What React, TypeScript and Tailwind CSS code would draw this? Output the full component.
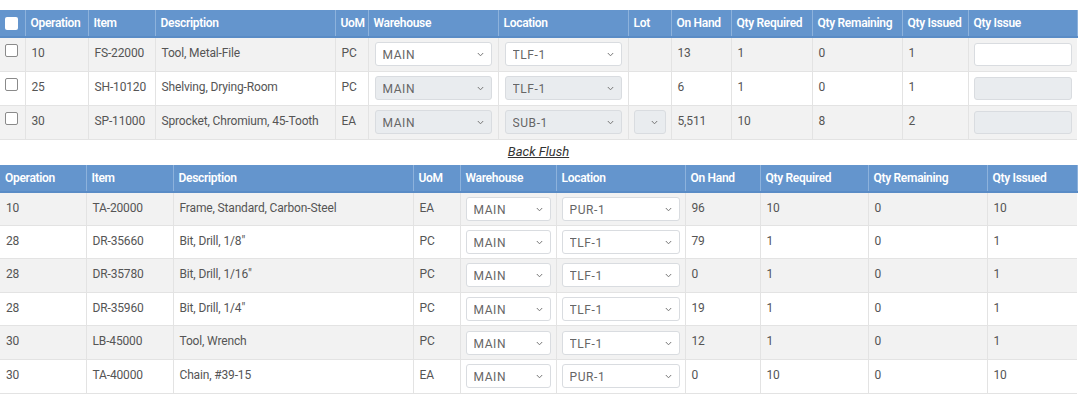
import React from 'react'

interface IssueRow {
  op: string
  item: string
  desc: string
  uom: string
  wh: string
  loc: string
  lot: boolean
  onHand: string
  req: string
  rem: string
  issued: string
  enabled: boolean
}

interface FlushRow {
  op: string
  item: string
  desc: string
  uom: string
  wh: string
  loc: string
  onHand: string
  req: string
  rem: string
  issued: string
}

const issueRows: IssueRow[] = [
  { op: '10', item: 'FS-22000', desc: 'Tool, Metal-File', uom: 'PC', wh: 'MAIN', loc: 'TLF-1', lot: false, onHand: '13', req: '1', rem: '0', issued: '1', enabled: true },
  { op: '25', item: 'SH-10120', desc: 'Shelving, Drying-Room', uom: 'PC', wh: 'MAIN', loc: 'TLF-1', lot: false, onHand: '6', req: '1', rem: '0', issued: '1', enabled: false },
  { op: '30', item: 'SP-11000', desc: 'Sprocket, Chromium, 45-Tooth', uom: 'EA', wh: 'MAIN', loc: 'SUB-1', lot: true, onHand: '5,511', req: '10', rem: '8', issued: '2', enabled: false },
]

const flushRows: FlushRow[] = [
  { op: '10', item: 'TA-20000', desc: 'Frame, Standard, Carbon-Steel', uom: 'EA', wh: 'MAIN', loc: 'PUR-1', onHand: '96', req: '10', rem: '0', issued: '10' },
  { op: '28', item: 'DR-35660', desc: 'Bit, Drill, 1/8"', uom: 'PC', wh: 'MAIN', loc: 'TLF-1', onHand: '79', req: '1', rem: '0', issued: '1' },
  { op: '28', item: 'DR-35780', desc: 'Bit, Drill, 1/16"', uom: 'PC', wh: 'MAIN', loc: 'TLF-1', onHand: '0', req: '1', rem: '0', issued: '1' },
  { op: '28', item: 'DR-35960', desc: 'Bit, Drill, 1/4"', uom: 'PC', wh: 'MAIN', loc: 'TLF-1', onHand: '19', req: '1', rem: '0', issued: '1' },
  { op: '30', item: 'LB-45000', desc: 'Tool, Wrench', uom: 'PC', wh: 'MAIN', loc: 'TLF-1', onHand: '12', req: '1', rem: '0', issued: '1' },
  { op: '30', item: 'TA-40000', desc: 'Chain, #39-15', uom: 'EA', wh: 'MAIN', loc: 'PUR-1', onHand: '0', req: '10', rem: '0', issued: '10' },
]

const th =
  'h-[27px] px-[5px] text-left align-middle whitespace-nowrap overflow-hidden font-semibold tracking-[-0.3px] text-white border-x border-[#8db2dc] first:border-l-0'
const td = 'h-[34px] px-[6px] pt-[6px] align-top whitespace-nowrap tracking-[-0.15px] border border-[#e3e3e3]'
const td2 = 'h-[33.6px] px-[6px] pt-[6px] align-top whitespace-nowrap tracking-[-0.15px] border border-[#e3e3e3]'
const tdCtl = 'h-[34px] px-[5px] align-middle border border-[#e3e3e3]'
const tdCtl2 = 'h-[33.6px] px-[5px] align-middle border border-[#e3e3e3]'

function Select({ value, disabled }: { value: string; disabled?: boolean }) {
  return (
    <div className="relative">
      <select
        value={value}
        disabled={disabled}
        onChange={() => {}}
        className={`block h-[24px] w-full appearance-none rounded-[3px] border border-[#d9dce0] pl-[7px] pt-[2px] text-[12px] tracking-[0.6px] text-[#666] ${
          disabled ? 'bg-[#e9ecef]' : 'bg-white'
        }`}
      >
        <option value={value}>{value}</option>
      </select>
      <svg
        className="pointer-events-none absolute right-[8px] top-[10px] h-[5px] w-[7px]"
        viewBox="0 0 7 5"
        fill="none"
      >
        <path d="M0.8 1 L3.5 3.8 L6.2 1" stroke="#777" strokeWidth="1" />
      </svg>
    </div>
  )
}

export default function App() {
  return (
    <div className="w-[1080px] bg-white pt-[10px] font-['Roboto','Liberation_Sans',sans-serif] text-[12px] text-[#555]">
      <table className="w-[1077px] table-fixed border-collapse">
        <colgroup>
          <col className="w-[25px]" />
          <col className="w-[63px]" />
          <col className="w-[67px]" />
          <col className="w-[180px]" />
          <col className="w-[33px]" />
          <col className="w-[130px]" />
          <col className="w-[130px]" />
          <col className="w-[43px]" />
          <col className="w-[60px]" />
          <col className="w-[81px]" />
          <col className="w-[90px]" />
          <col className="w-[66px]" />
          <col className="w-[109px]" />
        </colgroup>
        <thead>
          <tr className="bg-[#6495cd] border-b-2 border-[#5a8cc6]">
            <th className="h-[27px] px-[5px] text-left align-middle border-r border-[#8db2dc]">
              <span className="block h-[13px] w-[13px] rounded-[2px] bg-white" />
            </th>
            <th className={th}>Operation</th>
            <th className={th}>Item</th>
            <th className={th}>Description</th>
            <th className={th}>UoM</th>
            <th className={th}>Warehouse</th>
            <th className={th}>Location</th>
            <th className={th}>Lot</th>
            <th className={th}>On Hand</th>
            <th className={th}>Qty Required</th>
            <th className={th}>Qty Remaining</th>
            <th className={th}>Qty Issued</th>
            <th className={th}>Qty Issue</th>
          </tr>
        </thead>
        <tbody>
          {issueRows.map((r, i) => (
            <tr key={r.item} className={i % 2 === 0 ? 'bg-[#f2f2f2]' : 'bg-white'}>
              <td className="h-[34px] px-[5px] pt-[6px] align-top border border-[#e3e3e3] border-l-0">
                <span className="block h-[13px] w-[13px] rounded-[2px] border border-[#8a8a8a] bg-white" />
              </td>
              <td className={td}>{r.op}</td>
              <td className={td}>{r.item}</td>
              <td className={td}>{r.desc}</td>
              <td className={td}>{r.uom}</td>
              <td className={`${tdCtl} px-[6px]`}>
                <Select value={r.wh} disabled={!r.enabled} />
              </td>
              <td className={`${tdCtl} px-[6px]`}>
                <Select value={r.loc} disabled={!r.enabled} />
              </td>
              <td className={tdCtl}>{r.lot && <Select value="" disabled />}</td>
              <td className={td}>{r.onHand}</td>
              <td className={td}>{r.req}</td>
              <td className={td}>{r.rem}</td>
              <td className={td}>{r.issued}</td>
              <td className={`${tdCtl} border-r-0`}>
                <input
                  disabled={!r.enabled}
                  className={`block h-[23px] w-full rounded-[3px] border border-[#d9dce0] ${
                    r.enabled ? 'bg-white' : 'bg-[#e9ecef]'
                  }`}
                />
              </td>
            </tr>
          ))}
        </tbody>
      </table>

      <div className="flex h-[25px] w-[1077px] items-end justify-center pb-[3px]">
        <span className="text-[13px] italic text-[#333] underline">Back Flush</span>
      </div>

      <table className="w-[1077px] table-fixed border-collapse">
        <colgroup>
          <col className="w-[86px]" />
          <col className="w-[87px]" />
          <col className="w-[240px]" />
          <col className="w-[47px]" />
          <col className="w-[96px]" />
          <col className="w-[129px]" />
          <col className="w-[75px]" />
          <col className="w-[108px]" />
          <col className="w-[119px]" />
          <col className="w-[90px]" />
        </colgroup>
        <thead>
          <tr className="bg-[#6495cd] border-b-2 border-[#5a8cc6]">
            <th className={th}>Operation</th>
            <th className={th}>Item</th>
            <th className={th}>Description</th>
            <th className={th}>UoM</th>
            <th className={th}>Warehouse</th>
            <th className={th}>Location</th>
            <th className={th}>On Hand</th>
            <th className={th}>Qty Required</th>
            <th className={th}>Qty Remaining</th>
            <th className={th}>Qty Issued</th>
          </tr>
        </thead>
        <tbody>
          {flushRows.map((r, i) => (
            <tr key={r.item} className={i % 2 === 0 ? 'bg-[#f2f2f2]' : 'bg-white'}>
              <td className={`${td2} border-l-0`}>{r.op}</td>
              <td className={td2}>{r.item}</td>
              <td className={td2}>{r.desc}</td>
              <td className={td2}>{r.uom}</td>
              <td className={tdCtl2}>
                <Select value={r.wh} />
              </td>
              <td className={tdCtl2}>
                <Select value={r.loc} />
              </td>
              <td className={td2}>{r.onHand}</td>
              <td className={td2}>{r.req}</td>
              <td className={td2}>{r.rem}</td>
              <td className={`${td2} border-r-0`}>{r.issued}</td>
            </tr>
          ))}
        </tbody>
      </table>
    </div>
  )
}
